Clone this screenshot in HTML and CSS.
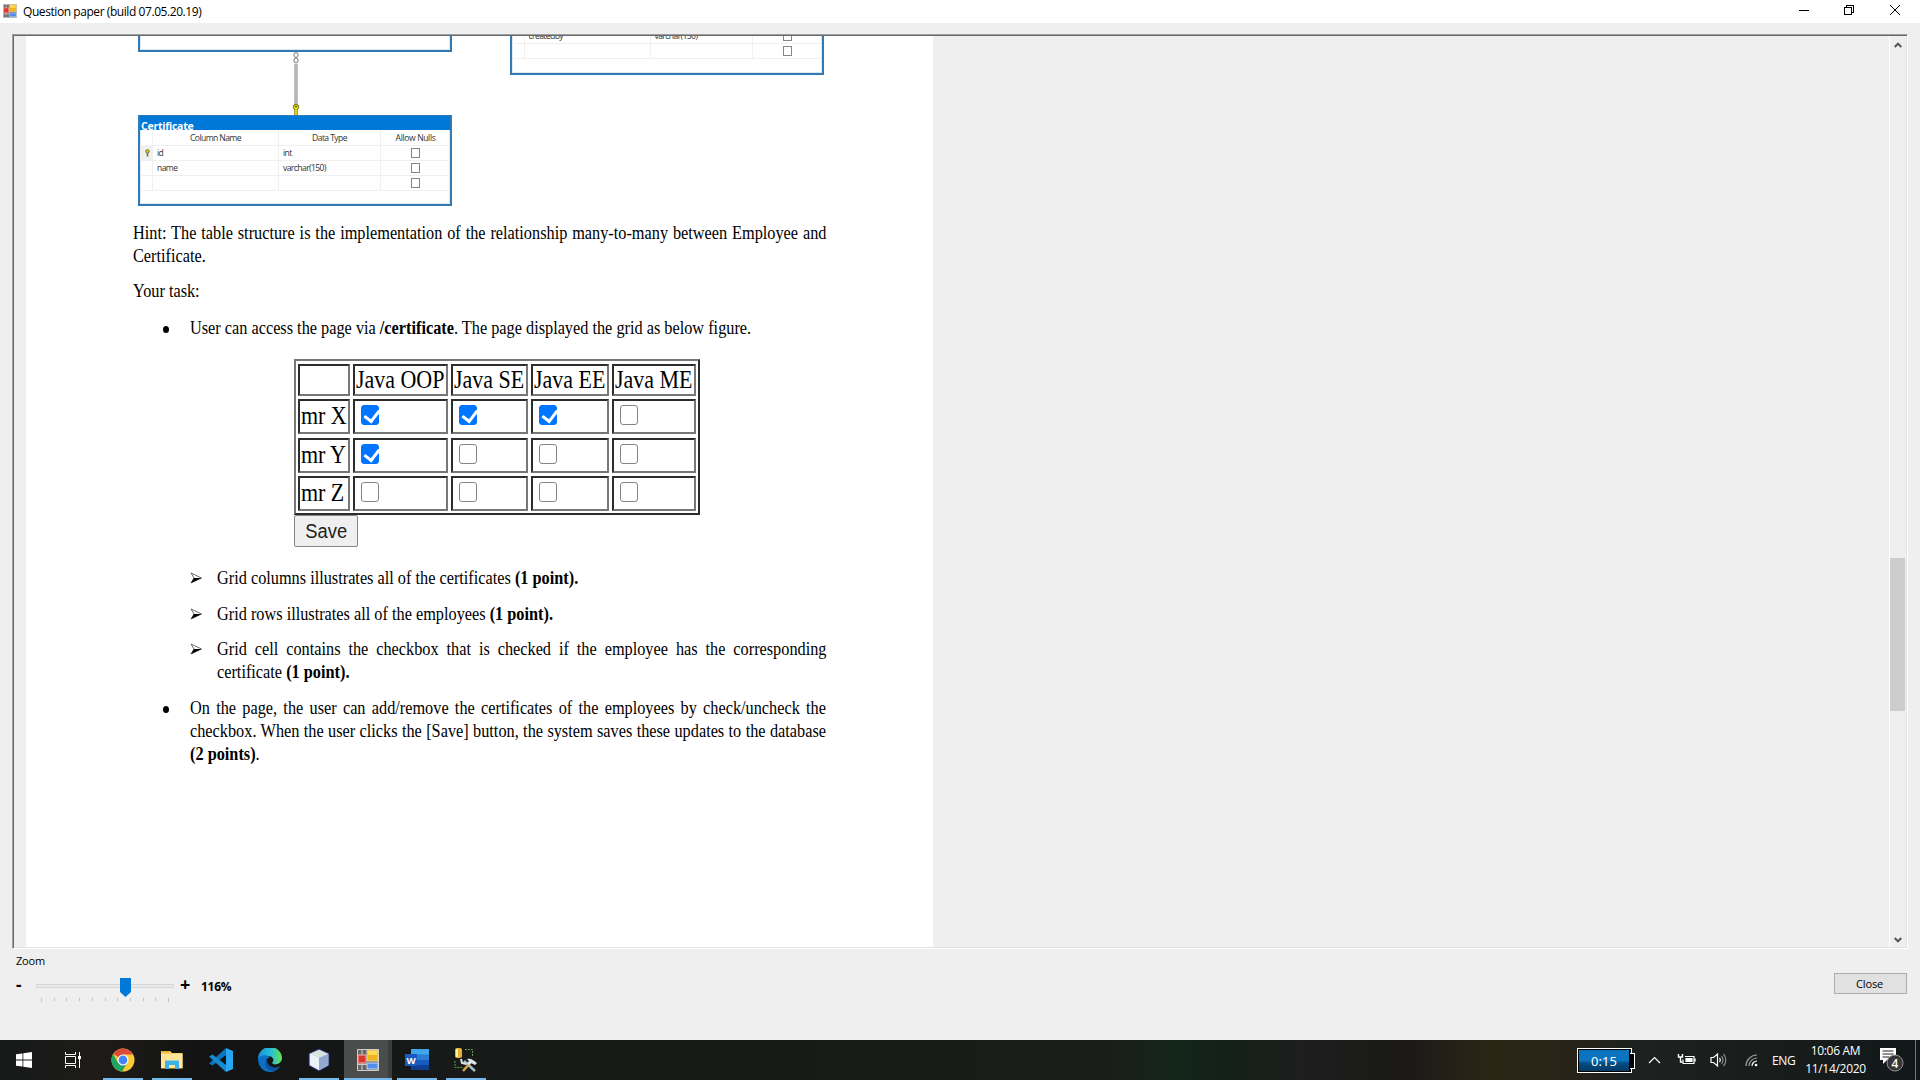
FILE: index.html
```
<!DOCTYPE html>
<html lang="en">
<head>
<meta charset="utf-8">
<title>Question paper (build 07.05.20.19)</title>
<link rel="stylesheet" href="styles.css">
</head>
<body>
<header class="titlebar">
  <svg class="app-icon" viewBox="0 0 22 22"><use href="#winforms"/></svg>
  <span class="title">Question paper (build 07.05.20.19)</span>
  <svg class="window-controls" width="120" height="23" viewBox="0 0 120 23" fill="none" stroke="#000" shape-rendering="crispEdges">
    <path d="M9 10.500h10M54.500 7.500h7v7h-7zM56.500 7V5.500h7v7H62"/>
    <path d="M100 5l10 10M110 5l-10 10" shape-rendering="auto"/>
  </svg>
</header>

<main class="viewer">
  <div class="paper">
    <section class="diagram">
      <div class="entity entity-cut-left"></div>
      <div class="entity entity-cut-right">
        <div class="erow"><i></i><b>createdby</b><b>varchar(150)</b><em><u></u></em></div>
        <div class="erow"><i></i><b></b><b></b><em><u></u></em></div>
      </div>
      <svg class="link" width="8" height="64" viewBox="0 0 8 64">
        <path d="M4 12v42" stroke="#8b8b8b" stroke-width="3"/><path d="M4 12v42" stroke="#ddd"/>
        <ellipse cx="4" cy="3" rx="2.100" ry="2.500" fill="#fff" stroke="#777"/><ellipse cx="4" cy="8.500" rx="2.100" ry="2.500" fill="#fff" stroke="#777"/>
        <path d="M4 55v8" stroke="#77751d" stroke-width="3.400"/><circle cx="4" cy="55" r="2.700" fill="#e8e000" stroke="#77751d"/><path d="M4 56v7" stroke="#f2ea00" stroke-width="1.600"/><circle cx="4" cy="54.500" r=".8"/>
      </svg>
      <div class="entity entity-certificate">
        <div class="ename"><span>Certificate</span></div>
        <div class="erow ehead"><i></i><b>Column Name</b><b>Data Type</b><em>Allow Nulls</em></div>
        <div class="erow"><i class="pk"><svg width="5" height="8" viewBox="0 0 5 8"><circle cx="2.500" cy="2.300" r="1.700" fill="#ddd52a" stroke="#6f6d20"/><path d="M2.500 4v3.500" stroke="#77751d" stroke-width="1.600"/></svg></i><b>id</b><b>int</b><em><u></u></em></div>
        <div class="erow"><i></i><b>name</b><b>varchar(150)</b><em><u></u></em></div>
        <div class="erow"><i></i><b></b><b></b><em><u></u></em></div>
      </div>
    </section>

    <div class="para hint"><div class="copy"><div class="full">Hint: The table structure is the implementation of the relationship many-to-many between Employee and</div><div>Certificate.</div></div></div>
    <div class="para task"><div class="copy">Your task:</div></div>
    <div class="para bullet access"><span class="dot"></span><div class="copy">User can access the page via <strong>/certificate</strong>. The page displayed the grid as below figure.</div></div>

    <figure class="figure">
      <div class="grid">
        <div></div><div><span>Java OOP</span></div><div><span>Java SE</span></div><div><span>Java EE</span></div><div><span>Java ME</span></div>
        <div><span>mr X</span></div><div><i class="box on"></i></div><div><i class="box on"></i></div><div><i class="box on"></i></div><div><i class="box"></i></div>
        <div><span>mr Y</span></div><div><i class="box on"></i></div><div><i class="box"></i></div><div><i class="box"></i></div><div><i class="box"></i></div>
        <div><span>mr Z</span></div><div><i class="box"></i></div><div><i class="box"></i></div><div><i class="box"></i></div><div><i class="box"></i></div>
      </div>
      <button class="save"><span>Save</span></button>
    </figure>

    <div class="para arrow"><svg class="chev" viewBox="0 0 12 12"><use href="#arrow"/></svg><div class="copy">Grid columns illustrates all of the certificates <strong>(1 point).</strong></div></div>
    <div class="para arrow"><svg class="chev" viewBox="0 0 12 12"><use href="#arrow"/></svg><div class="copy">Grid rows illustrates all of the employees <strong>(1 point).</strong></div></div>
    <div class="para arrow last"><svg class="chev" viewBox="0 0 12 12"><use href="#arrow"/></svg><div class="copy"><div class="full">Grid cell contains the checkbox that is checked if the employee has the corresponding</div><div>certificate <strong>(1 point).</strong></div></div></div>
    <div class="para bullet"><span class="dot"></span><div class="copy"><div class="full">On the page, the user can add/remove the certificates of the employees by check/uncheck the</div><div class="full">checkbox. When the user clicks the [Save] button, the system saves these updates to the database</div><div><strong>(2 points)</strong>.</div></div></div>
  </div>
  <div class="scrollbar">
    <svg viewBox="0 0 8 6" width="8" height="6"><path d="M.7 5L4 1.700 7.300 5" fill="none" stroke="#555" stroke-width="2"/></svg>
    <div class="thumb"></div>
    <svg viewBox="0 0 8 6" width="8" height="6"><path d="M.7 1L4 4.300 7.300 1" fill="none" stroke="#555" stroke-width="2"/></svg>
  </div>
</main>

<footer class="controls">
  <div class="zoom">
    <div class="zoom-label">Zoom</div>
    <div class="zoom-row">
      <span class="minus">-</span>
      <svg class="slider" width="140" height="26" viewBox="0 0 140 26">
        <path d="M.5 6.500h137v3H.5z" fill="#e7eaea" stroke="#d6d6d6"/>
        <path d="M5.500 20v4M18.500 20v3M30.500 20v3M43.500 20v3M56.500 20v3M69.500 20v3M81.500 20v3M94.500 20v3M107.500 20v3M119.500 20v3M132.500 20v4" stroke="#c4c4c4"/>
        <path d="M84 0h11v14l-5.500 5L84 14z" fill="#0078d7"/>
      </svg>
      <span class="plus">+</span>
      <span class="percent">116%</span>
    </div>
  </div>
  <button class="close">Close</button>
</footer>

<nav class="taskbar">
  <div class="tb"><svg width="16" height="16" viewBox="0 0 16 16" fill="#fff"><path d="M0 2.300L6.500 1.400v6.200H0zM7.300 1.300L16 0v7.600H7.300zM0 8.400h6.500v6.200L0 13.700zM7.300 8.400H16V16l-8.700-1.300z"/></svg></div>
  <div class="tb"><svg width="17" height="16" viewBox="0 0 17 16" fill="none" stroke="#fff"><path d="M.5 0v2.500h10V0M.5 16v-2.500h10V16M.5 4.500h10v7H.5zM14.500 0v16"/><path d="M13 4h3v3h-3z" fill="#fff" stroke="none"/></svg></div>
  <div class="tb run"><svg width="24" height="24" viewBox="0 0 24 24"><circle cx="12" cy="12" r="11.500" fill="#fbc934"/><path d="M12 12L2.200 6A11.500 11.500 0 0 1 22.100 6.500H12z" fill="#dc4a3c"/><path d="M2.100 6.100A11.500 11.500 0 0 0 11 23.450L16.600 14.500 12 17 7 14.700z" fill="#1da462"/><circle cx="12" cy="12" r="5.500" fill="#fff"/><circle cx="12" cy="12" r="4.400" fill="#4285f4"/></svg></div>
  <div class="tb run"><svg width="22" height="20" viewBox="0 0 22 20"><path d="M0 1h9l2 2h10.500v15.500H0z" fill="#f7cf62"/><path d="M0 4h21.500v14H0z" fill="#ffe49a"/><path d="M1 1h7v1.500H1z" fill="#e5ae22"/><path d="M4 19v-8.500h14V19h-4v-4H8v4z" fill="#3db2ea"/></svg></div>
  <div class="tb"><svg width="24" height="24" viewBox="0 0 24 24"><path d="M17 0l7 3v18l-7 3z" fill="#29a6f1"/><path d="M17 0v7L3.500 17.500 0 15.500z" fill="#0c73bd"/><path d="M0 8.500l3.500-2L17 17v7z" fill="#168bd3"/></svg></div>
  <div class="tb"><svg width="24" height="24" viewBox="0 0 24 24"><defs><linearGradient id="edge" x2="1"><stop stop-color="#1a8fdb"/><stop offset=".55" stop-color="#27bfd6"/><stop offset="1" stop-color="#68e34c"/></linearGradient></defs><path d="M0 11A12 11.500 0 0 1 24 10c0 6-8 8-10 5 3-3 1-7-4-7-4 0-8 1-10 3z" fill="url(#edge)"/><path d="M0 11C2 7 9 6 12.500 9.500 7 9 6 17 13 21c4 1 7-1 9-3-2 4-6 6-10 6C5 24 0 18 0 11z" fill="#0c71c5"/><path d="M9 11c-4 4-1 11 5 12 4 0 6-2 8-5-3 2-8 2-11-1-2-2-2-4-2-6z" fill="#10519c"/></svg></div>
  <div class="tb run"><svg width="24" height="24" viewBox="0 0 24 24"><path d="M12 1l10 4.500v12L12 23 2 17.500v-12z" fill="#b8cbe5" stroke="#25256b"/><path d="M3 6l9-4 9 4-9 4z" fill="#d5e5dc"/><path d="M3 6l9 4v12l-9-5z" fill="#edf2fa"/><path d="M21 6l-9 4v12l9-5z" fill="#93a9d2"/></svg></div>
  <div class="tb run active"><svg width="22" height="22" viewBox="0 0 22 22"><g id="winforms"><path d="M.5.5h21v21H.5z" fill="#686868" stroke="#d0ccca"/><path d="M5 1v20M1 15.500h9" stroke="#ccc" stroke-width="1"/><path d="M10 1h11v11H10z" fill="#f0b51c" stroke="#ddd3b4"/><path d="M11 2h9v4h-9z" fill="#ffda50"/><path d="M1 6h8v8H1z" fill="#dd3430" stroke="#f4b3a3"/><path d="M10 14h11v6H10z" fill="#538dea" stroke="#c7dafc"/></g></svg></div>
  <div class="tb run"><svg width="24" height="22" viewBox="0 0 24 22"><path d="M6 0h18v6H6z" fill="#41a5ee"/><path d="M6 5.500h18v5.500H6z" fill="#2b7cd3"/><path d="M6 11h18v5.500H6z" fill="#185abd"/><path d="M6 16h18v5H6z" fill="#103f91"/><path d="M0 5h12v12H0z" fill="#185abd"/><text class="word-w" x="6" y="14.500" text-anchor="middle" fill="#fff">W</text></svg></div>
  <div class="tb run"><svg width="24" height="24" viewBox="0 0 24 24"><path d="M11 1.500h7.500V9M1 13v6.500h8" fill="none" stroke="#5aa344" stroke-dasharray="2 1"/><rect x="1" y="0" width="7" height="10" rx="2" fill="#e7b32c"/><path d="M3 1v8" stroke="#fff1a9" stroke-width="2"/><path d="M10 13l11 10" stroke="#a9bdcd" stroke-width="2.500"/><path d="M9 23l8-9" stroke="#d6a650" stroke-width="2.500"/><path d="M13 11c4-1 6 1 10 4l-2 2-4-2-2 2-2-2 2-2z" fill="#dce5ec"/><path d="M7 11l1 4 4 1" fill="none" stroke="#dce5ec" stroke-width="2"/></svg></div>

  <div class="tray">
    <div class="battery"><span>0:15</span></div>
    <svg class="tray-icons" width="130" height="40" viewBox="0 0 130 40" fill="none" stroke="#fff" stroke-width="1.200">
      <path d="M10 23l5.500-5.500L21 23"/>
      <path d="M46 16.500h9v7H44v-4" /><path d="M47 18.500h6v3h-6z" fill="#fff"/><path d="M56 18.500v3M39.500 14v3h4v-3M41.500 17v5h2" stroke-width="1.400"/>
      <path d="M72 17.500h2.500l4-3.500v12l-4-3.500H72z"/><path d="M80.500 18c1 1 1 3 0 4"/><path d="M82.500 16c2 2 2 6 0 8M84.500 14c3 3 3 9 0 12" stroke="#8b8b8b"/>
      <path d="M107 26a11 11 0 0 1 11-11M110 26a8 8 0 0 1 8-8" stroke="#9a9a9a"/><path d="M113 26a5 5 0 0 1 5-5" /><circle cx="117" cy="25" r="1.300" fill="#fff" stroke="none"/>
    </svg>
    <span class="lang">ENG</span>
    <div class="clock"><div>10:06 AM</div><div class="date">11/14/2020</div></div>
    <svg class="notify" width="26" height="26" viewBox="0 0 26 26"><path d="M1 1h16v12H8l-4 4v-4H1z" fill="#fff"/><path d="M3.500 4h11M3.500 7h11M3.500 10h7" stroke="#222"/><circle cx="16" cy="16" r="8" fill="#353535" stroke="#929292"/><text class="count" x="16" y="20.500" text-anchor="middle" fill="#fff">4</text></svg>
    <div class="peek"></div>
  </div>
</nav>
<svg width="0" height="0" class="defs"><defs><g id="arrow"><path d="M1 1l10.500 5L1 11l3-5z" fill="#fff" stroke="#444" stroke-width=".8"/><path d="M4 6h7.500L1 11z"/></g></defs></svg>
</body>
</html>
```
FILE: styles.css
```
* { box-sizing: border-box; }
body {
  margin: 0;
  width: 1920px;
  height: 1080px;
  overflow: hidden;
  display: flex;
  flex-direction: column;
  background: #efefef;
  color: #000;
  font: 12px "Open Sans", "Noto Sans", sans-serif;
}
svg { display: block; flex: none; }
.defs { position: absolute; }

/* Title bar */
.titlebar { height: 23px; background: #fff; display: flex; align-items: center; padding: 0 10px 0 3px; flex: none; }
.app-icon { width: 14px; height: 14px; margin: -1px 6px 0 0; }
.title { flex: 1; letter-spacing: -.43px; white-space: nowrap; }

/* Document viewer */
.viewer {
  height: 915px;
  margin: 11px 12px 0;
  border: 1px solid;
  border-color: #a0a0a0 #fff #fff #a0a0a0;
  box-shadow: inset 1px 1px #696969, inset -1px -1px #e3e3e3;
  padding: 1px 1px 1px 13px;
  display: flex;
  justify-content: space-between;
  flex: none;
}
.paper { width: 907px; background: #fff; padding-left: 106.500px; overflow: hidden; height: 911px; }

/* Table diagram */
.diagram { height: 186px; position: relative; font-size: 8.600px; color: #333; }
.entity { position: absolute; width: 314px; border: 2px solid #3579b3; background: #fff; box-shadow: inset 0 0 0 1px #dce9f2; }
.entity-cut-left { left: 5.500px; top: -30px; height: 46px; }
.entity-cut-right { left: 377px; top: -9.500px; height: 48.500px; }
.entity-certificate { left: 5.500px; top: 79px; height: 91px; }
.ename { height: 14px; background: #0078d7; color: #fff; overflow: hidden; padding-left: 1px; font: bold 10.500px/20px "Open Sans", sans-serif; margin-top: -1px; }
.ename span { display: inline-block; letter-spacing: -.25px; }
.erow { display: grid; grid-template-columns: 13px 126px 102px 1fr; height: 15px; border-bottom: 1px solid #f0f0f0; line-height: 14px; letter-spacing: -.6px; }
.erow > * { font-style: normal; font-weight: normal; border-right: 1px solid #f0f0f0; padding-left: 4px; }
.erow em { display: flex; align-items: center; justify-content: center; padding: 0; border: 0; letter-spacing: -.38px; }
.erow u { width: 9px; height: 10px; border: 1px solid #858585; }
.ehead { text-align: center; height: 16px; line-height: 17px; }
.ehead > b { padding: 0; }
.erow .pk { background: #f0f0f0; padding: 3px 0 0 5px; }
.link { position: absolute; left: 159px; top: 16px; }

/* Running text */
.para { display: flex; width: 693.500px; font: 18.500px/22.700px "Liberation Serif", serif; margin-bottom: 12.800px; }
.copy { flex: none; width: 788px; transform: scaleX(.88); transform-origin: 0 50%; white-space: nowrap; }
.full { text-align-last: justify; }
.bullet, .arrow { padding-left: 57.500px; }
.bullet .copy { width: 722.700px; }
.arrow .copy { width: 692.600px; }
.task { margin-bottom: 14px; }
.dot { width: 6px; height: 7px; border-radius: 50%; background: #000; margin: 9px 21px 0 -27px; flex: none; }
.chev { width: 12px; height: 12px; margin: 5px 14.500px 0 0; }
.last { margin-bottom: 13.600px; }

/* Checkbox grid */
.figure { margin: 19.500px 0 20px 161.500px; width: 406px; }
.access { margin-bottom: 0; }
.grid {
  width: 406px; height: 156px;
  display: grid;
  grid-template-columns: 52px 95px 77px 78px 84px;
  grid-template-rows: 32px 35px 35px 35px;
  column-gap: 3px;
  row-gap: 3.300px;
  padding: 3px 2px;
  border: 2px solid;
  border-color: #777 #2c2c2c #2c2c2c #777;
}
.grid > div { border: 2px solid; border-color: #2c2c2c #777 #777 #2c2c2c; font: 24.400px/27px "Liberation Serif", serif; white-space: nowrap; padding-left: .5px; }
.grid > div:nth-child(n+6) { line-height: 29.500px; }
.grid span { display: inline-block; transform: scaleX(.9); transform-origin: 0 50%; }
.box { display: block; width: 18px; height: 20px; border: 1px solid #858585; border-radius: 3px; margin: 4px 0 0 5px; background: #fff; }
.box.on { background: #0075ff; border-color: #0075ff; }
.box.on::after { content: ""; display: block; width: 7px; height: 12px; border: solid #fff; border-width: 0 3px 3px 0; transform: rotate(38deg); margin: 1px 0 0 5px; }
.save { display: block; width: 64px; height: 32px; padding: 0; background: #efefef; border: 1px solid #858585; border-radius: 2px; font: 19.500px "Liberation Sans", sans-serif; color: #222; }
.save span { display: inline-block; transform: scaleX(.94); }

/* Scroll bar */
.scrollbar { width: 17px; border-left: 1px solid #fff; display: flex; flex-direction: column; align-items: center; padding: 6px 1px 4px 0; }
.thumb { width: 15px; height: 153px; background: #cdcdcd; margin: 510px 0 auto; }

/* Bottom controls */
.controls { height: 91px; display: flex; justify-content: space-between; padding: 3px 13px 0 16px; flex: none; font-size: 11px; }
.zoom-label { height: 26px; line-height: 18px; letter-spacing: -.2px; }
.zoom-row { display: flex; align-items: flex-start; font-weight: bold; }
.minus { width: 20px; font-size: 17px; line-height: 13px; }
.plus { width: 20px; font-size: 18px; line-height: 12px; margin-left: 4px; }
.percent { line-height: 17px; font-size: 12px; letter-spacing: -.25px; margin-left: 1px; }
.close { width: 73px; height: 21px; margin-top: 21px; padding: 0 2px 0 0; border: 1px solid #adadad; background: #e1e1e1; font: 11px "Open Sans", sans-serif; letter-spacing: -.1px; color: #000; }

/* Taskbar */
.taskbar {
  height: 40px;
  display: flex;
  flex: none;
  color: #fff;
  background: linear-gradient(90deg, #151918 0, #1e1c19 100px, #121312 190px, #171a18 450px, #171916 700px, #1b1d1b 1110px, #12261a 1175px, #142018 1230px, #1d1e1d 1300px, #1a1918 1400px, #2a2415 1480px, #2a2416 1550px, #1d211f 1630px, #171c1b 1800px, #111819 1920px);
}
.tb { width: 49px; height: 40px; display: flex; align-items: center; justify-content: center; position: relative; flex: none; }
.tb:first-child { padding-right: 1px; }
.run::after { content: ""; position: absolute; left: 5px; right: 4px; bottom: 0; height: 2px; background: #76b9ed; }
.active { background: #4b4d4c; border-right: 4px solid #3c3e3d; padding-left: 3px; width: 48px; margin-left: 1px; }
.active::after { left: 0; right: -4px; }
.word-w { font: bold 9.500px "Open Sans", sans-serif; }
.tray { margin-left: auto; display: flex; align-items: center; height: 40px; }
.battery { width: 55px; height: 25px; border: 1px solid #fff; padding: 1px 2px 1px 1px; background: #000; position: relative; }
.battery span { display: block; height: 21px; background: linear-gradient(#0872bd 0, #0b75c1 48%, #034b80 65%, #063b65); text-align: center; font: 13px/22px "Noto Sans", sans-serif; }
.battery::after { content: ""; position: absolute; right: -4px; top: 4px; width: 4px; height: 14px; border: 1px solid #fff; border-left: 0; background: #000; }
.tray-icons { margin-left: 7px; width: 130px; }
.lang { width: 30px; margin-left: 3px; letter-spacing: -.3px; white-space: nowrap; }
.clock { width: 67px; text-align: center; line-height: 18px; letter-spacing: -.3px; white-space: nowrap; }
.notify { margin: -1px 10px 0 10px; }
.count { font: 600 12px "Open Sans", sans-serif; }
.peek { width: 5px; height: 40px; border-left: 1px solid #747777; }
```
